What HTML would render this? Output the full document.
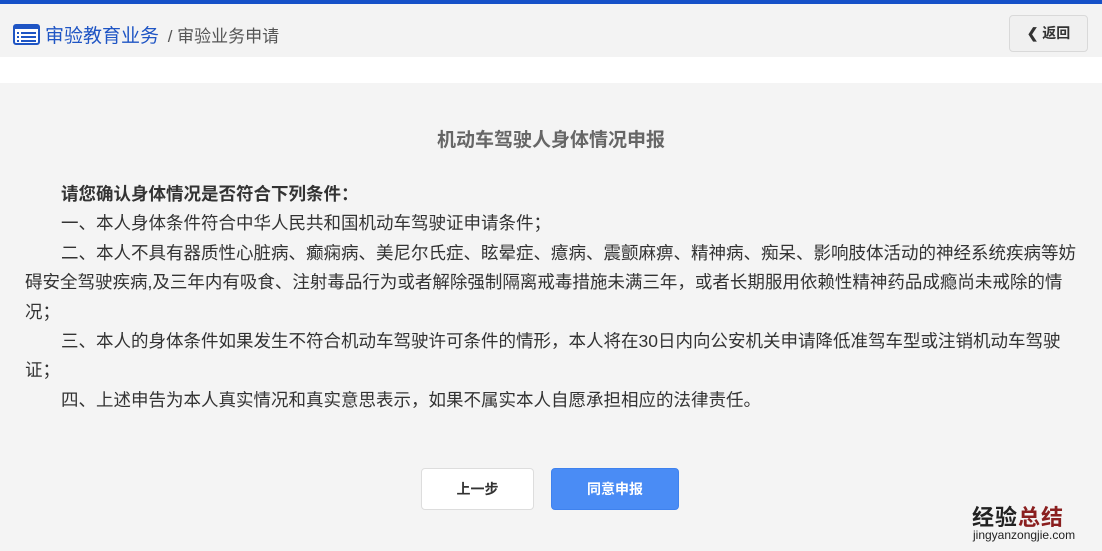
<!DOCTYPE html>
<html><head><meta charset="utf-8"><style>
*{margin:0;padding:0;box-sizing:border-box}
body{width:1102px;height:551px;overflow:hidden;background:#f4f4f4;font-family:"Liberation Sans","Noto Sans CJK SC",sans-serif;position:relative}
.top{height:4px;background:#1550c8}
.hdr{height:53px;background:#f3f3f3;position:relative}
.crumb{position:absolute;left:13px;top:17px;font-size:19px;color:#1f55c4;display:flex;align-items:center}
.crumb .sub{color:#555;font-size:17px;margin-left:4px}
.back{position:absolute;left:1009px;top:11px;width:79px;height:37px;border:1px solid #d9d9d9;border-radius:4px;background:#f0f0f0;font-size:14px;color:#333;text-align:center;line-height:35px;font-weight:bold}
.white{height:26px;background:#fff}
h1{position:absolute;top:125px;width:1102px;text-align:center;font-size:19px;color:#666;font-weight:bold}
.body{position:absolute;left:25px;top:180px;font-size:17.5px;color:#333;line-height:29.4px;white-space:nowrap}
.i{padding-left:36px}
.btn{position:absolute;top:468px;height:42px;border-radius:4px;font-size:14px;font-weight:bold;text-align:center;line-height:40px}
.b1{left:421px;width:113px;background:#fff;border:1px solid #ddd;color:#333}
.b2{left:551px;width:128px;background:#4a8cf5;border:1px solid #3f82ee;color:#fff}
.wm{position:absolute;left:972px;top:500px;font-size:22px;font-weight:bold;color:#222;letter-spacing:1px}
.wm span{color:#8a1f1f}
.wm2{position:absolute;left:973px;top:528px;font-size:12px;color:#222}
</style></head><body>
<div class="top"></div>
<div class="hdr">
<div class="crumb"><svg width="27" height="21" viewBox="0 0 27 21" style="margin-right:5px"><rect x="1" y="1" width="25" height="19" rx="2" fill="#fff" stroke="#1f55c4" stroke-width="2"/><rect x="1" y="1" width="25" height="4" fill="#1f55c4"/><g fill="#1f55c4"><rect x="4" y="8" width="2" height="2"/><rect x="8" y="8" width="15" height="2"/><rect x="4" y="12" width="2" height="2"/><rect x="8" y="12" width="15" height="2"/><rect x="4" y="16" width="2" height="2"/><rect x="8" y="16" width="15" height="2"/></g></svg>审验教育业务<span class="sub">&nbsp;/ 审验业务申请</span></div>
<div class="back">❮ 返回</div>
</div>
<div class="white"></div>
<h1>机动车驾驶人身体情况申报</h1>
<div class="body">
<div class="i"><b>请您确认身体情况是否符合下列条件：</b></div>
<div class="i">一、本人身体条件符合中华人民共和国机动车驾驶证申请条件；</div>
<div class="i">二、本人不具有器质性心脏病、癫痫病、美尼尔氏症、眩晕症、癔病、震颤麻痹、精神病、痴呆、影响肢体活动的神经系统疾病等妨</div>
<div>碍安全驾驶疾病,及三年内有吸食、注射毒品行为或者解除强制隔离戒毒措施未满三年，或者长期服用依赖性精神药品成瘾尚未戒除的情</div>
<div>况；</div>
<div class="i">三、本人的身体条件如果发生不符合机动车驾驶许可条件的情形，本人将在30日内向公安机关申请降低准驾车型或注销机动车驾驶</div>
<div>证；</div>
<div class="i">四、上述申告为本人真实情况和真实意思表示，如果不属实本人自愿承担相应的法律责任。</div>
</div>
<div class="btn b1">上一步</div>
<div class="btn b2">同意申报</div>
<div class="wm">经验<span>总结</span></div>
<div class="wm2">jingyanzongjie.com</div>
</body></html>
